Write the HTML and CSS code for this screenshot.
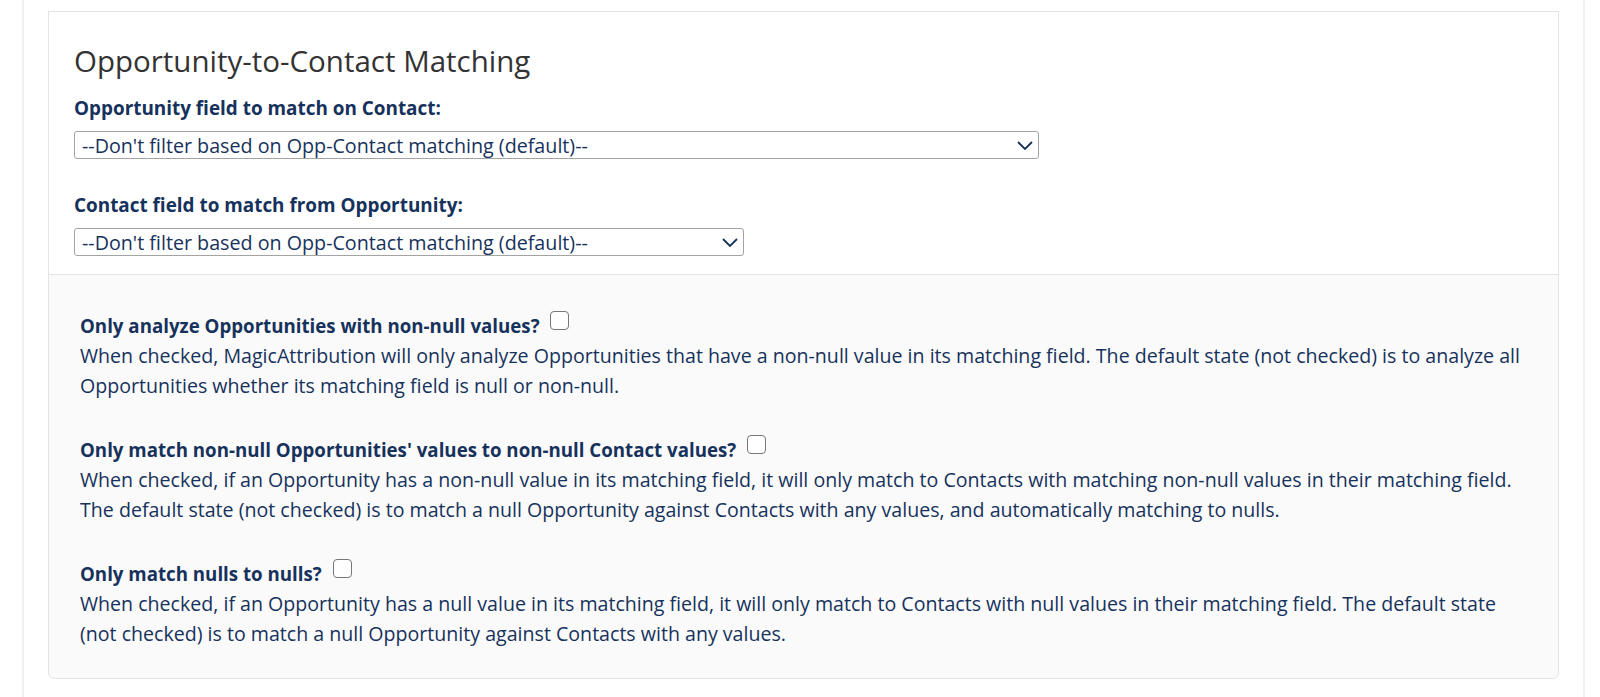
FILE: index.html
```html
<!DOCTYPE html>
<html lang="en">
<head>
    <meta charset="UTF-8">
    <meta name="viewport" content="width=device-width, initial-scale=1.0">
    <title>Opportunity-to-Contact Matching</title>
    <link rel="stylesheet" href="styles.css">
</head>
<body>
    <div class="page">
        <div class="card">
            <h2 class="card-title">Opportunity-to-Contact Matching</h2>

            <label class="field-label" for="oppField">Opportunity field to match on Contact:</label>
            <div class="select-wrap select-wide">
                <select id="oppField">
                    <option>--Don't filter based on Opp-Contact matching (default)--</option>
                </select>
                <svg class="chevron" viewBox="0 0 16 9" width="16" height="9"><path d="M1 1l7 7 7-7" fill="none" stroke="#16325c" stroke-width="1.8"/></svg>
            </div>

            <label class="field-label second" for="contactField">Contact field to match from Opportunity:</label>
            <div class="select-wrap select-narrow">
                <select id="contactField">
                    <option>--Don't filter based on Opp-Contact matching (default)--</option>
                </select>
                <svg class="chevron" viewBox="0 0 16 9" width="16" height="9"><path d="M1 1l7 7 7-7" fill="none" stroke="#16325c" stroke-width="1.8"/></svg>
            </div>
        </div>

        <div class="options">
            <div class="option">
                <label class="option-label">Only analyze Opportunities with non-null values? <input type="checkbox"></label>
                <p class="option-help">When checked, MagicAttribution will only analyze Opportunities that have a non-null value in its matching field. The default state (not checked) is to analyze all Opportunities whether its matching field is null or non-null.</p>
            </div>
            <div class="option">
                <label class="option-label">Only match non-null Opportunities' values to non-null Contact values? <input type="checkbox"></label>
                <p class="option-help">When checked, if an Opportunity has a non-null value in its matching field, it will only match to Contacts with matching non-null values in their matching field. The default state (not checked) is to match a null Opportunity against Contacts with any values, and automatically matching to nulls.</p>
            </div>
            <div class="option">
                <label class="option-label">Only match nulls to nulls? <input type="checkbox"></label>
                <p class="option-help">When checked, if an Opportunity has a null value in its matching field, it will only match to Contacts with null values in their matching field. The default state (not checked) is to match a null Opportunity against Contacts with any values.</p>
            </div>
        </div>
    </div>
</body>
</html>
```

FILE: styles.css
```css
body {
    margin: 0;
    background: #fff;
    font-family: "Open Sans", Lato, sans-serif;
    color: #16325c;
}
.page {
    margin: 0 15px 0 22px;
    padding: 11px 24px 30px;
    border-left: 2px solid #f0f0f0;
    border-right: 2px solid #f0f0f0;
    min-height: 697px;
    box-sizing: border-box;
}
.card {
    background: #fff;
    border: 1px solid #e4e4e4;
    border-bottom: none;
    padding: 30px 25px 18px;
}
.card-title {
    margin: 0 0 14px;
    font-size: 29.5px;
    font-weight: 400;
    line-height: 37px;
    color: #333;
}
.field-label {
    display: block;
    font-size: 18.9px;
    font-weight: 700;
    line-height: 30px;
    margin-bottom: 8px;
}
.field-label.second {
    margin-top: 31px;
}
.select-wrap {
    position: relative;
}
.select-wide {
    width: 965px;
}
.select-narrow {
    width: 670px;
}
.select-wrap select {
    appearance: none;
    -webkit-appearance: none;
    width: 100%;
    height: 28px;
    margin: 0;
    padding: 0 30px 0 7px;
    border: 1px solid #a3a3a3;
    border-radius: 3px;
    background: #fff;
    font-family: inherit;
    font-size: 19.7px;
    color: #16325c;
    display: block;
}
.chevron {
    position: absolute;
    right: 6px;
    top: 10px;
    pointer-events: none;
}
.options {
    background: #fafafa;
    border: 1px solid #e4e4e4;
    border-radius: 0 0 6px 6px;
    padding: 36px 31px 30px;
}
.option {
    margin-bottom: 35px;
}
.option:last-child {
    margin-bottom: 0;
}
.option-label {
    display: block;
    font-size: 18.7px;
    font-weight: 700;
    line-height: 30px;
}
.option-label input {
    appearance: none;
    -webkit-appearance: none;
    width: 19px;
    height: 19px;
    margin: 0 0 0 6px;
    border: 1px solid #777;
    border-radius: 4px;
    background: #fff;
    vertical-align: top;
}
.option-help {
    margin: 0;
    font-size: 19.6px;
    line-height: 29.5px;
}
```
